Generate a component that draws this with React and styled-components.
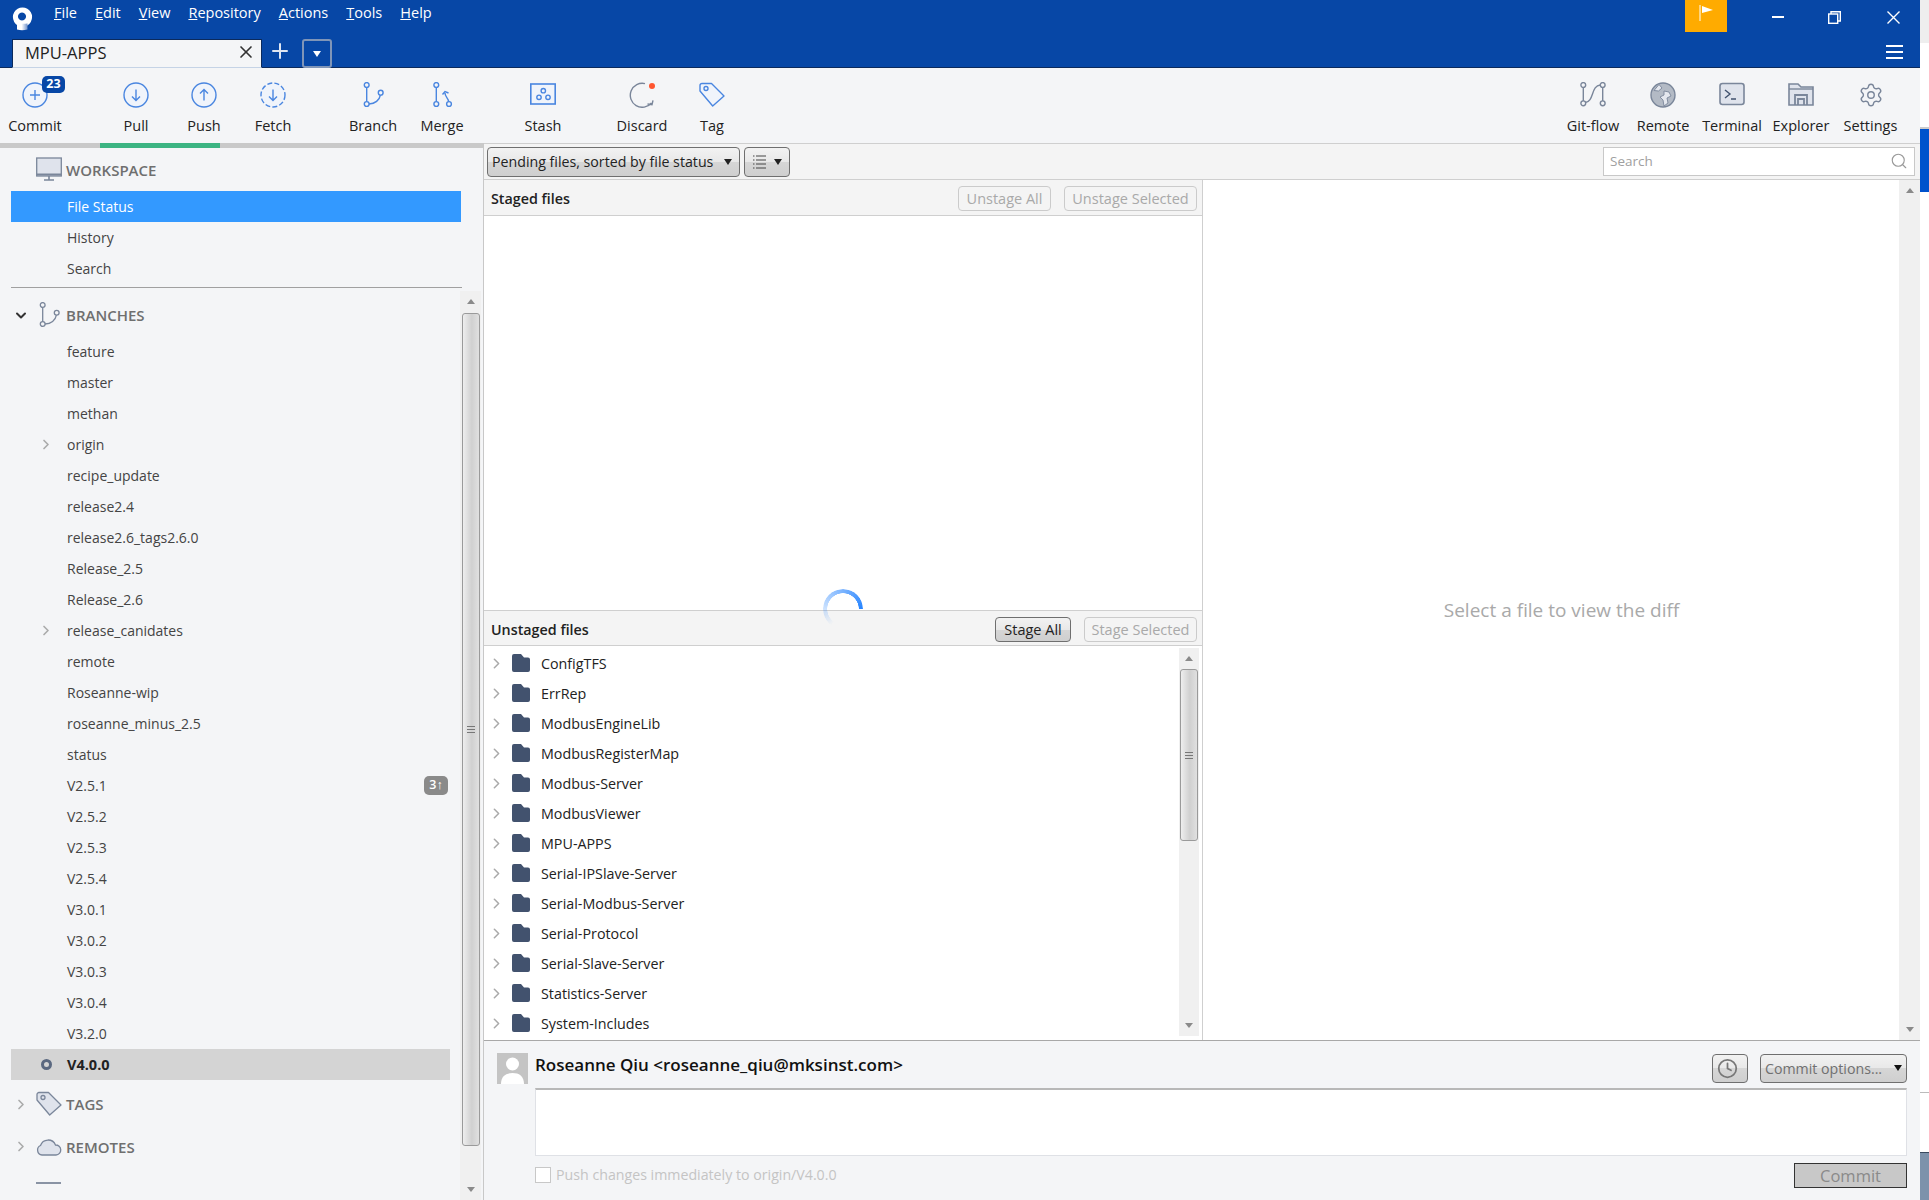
import styled, { createGlobalStyle } from "styled-components";
import { ChevronRight, ChevronDown, Clock, Search, Settings, X, Plus } from "lucide-react";

const GlobalStyle = createGlobalStyle`
  html, body {
    margin: 0;
    padding: 0;
    background: #fff;
  }
  * {
    box-sizing: border-box;
  }
  body {
    font-family: "Open Sans", "Noto Sans", "Liberation Sans", sans-serif;
    font-size: 14.5px;
    color: #222;
  }
`;

const Page = styled.div`
  display: flex;
  width: 1929px;
  height: 1200px;
  overflow: hidden;
`;

const AppFrame = styled.div`
  display: flex;
  flex-direction: column;
  width: 1920px;
  height: 1200px;
`;

const BehindStrip = styled.div`
  display: flex;
  flex-direction: column;
  width: 9px;
`;

const StripPart = styled.div`
  height: ${(p) => p.$h}px;
  flex: ${(p) => (p.$h ? "none" : 1)};
  background: ${(p) => p.$c};
  border-bottom: ${(p) => (p.$line ? `1px solid ${p.$line}` : "none")};
`;

/* title bar */
const TitleBar = styled.div`
  height: 68px;
  background: #0747a6;
  border-bottom: 1px solid #0b2a5c;
  display: flex;
  flex-direction: column;
`;

const TopRow = styled.div`
  height: 39px;
  display: flex;
  align-items: flex-start;
`;

const Logo = styled.svg`
  width: 22px;
  height: 24px;
  margin: 7px 0 0 11px;
`;

const Menu = styled.nav`
  display: flex;
  gap: 18px;
  margin-left: 21px;
  color: #fff;
  line-height: 26px;
`;

const FlagBox = styled.div`
  width: 42px;
  height: 32px;
  margin-left: auto;
  margin-right: 24px;
  background: #ffab00;
  display: flex;
  align-items: center;
  justify-content: center;
  padding-bottom: 6px;
`;

const WinButton = styled.div`
  width: 54px;
  height: 34px;
  margin-right: ${(p) => p.$mr || 0}px;
  display: flex;
  align-items: center;
  justify-content: center;
  color: #fff;
`;

const TabRow = styled.div`
  flex: 1;
  display: flex;
  align-items: flex-end;
  padding: 0 17px 0 12px;
`;

const Tab = styled.div`
  width: 250px;
  height: 29px;
  background: #f4f5f7;
  border-top: 1px solid #0b2a5c;
  border-right: 1px solid #0b2a5c;
  border-left: 1px solid #0b2a5c;
  border-bottom: 1px solid #c5d3e6;
  display: flex;
  align-items: center;
  justify-content: space-between;
  padding: 0 5px 3px 12px;
  font-size: 16.5px;
  color: #222;
  margin-bottom: -1px;
`;

const AddTab = styled.div`
  width: 30px;
  margin: 0 7px 4px 3px;
  color: #dfe6f2;
  display: flex;
  justify-content: center;
`;

const TabMenu = styled.div`
  width: 30px;
  height: 29px;
  border: 2px solid #7f95b8;
  border-radius: 3px;
  display: flex;
  align-items: center;
  justify-content: center;
  margin-bottom: -1px;
`;

const Burger = styled.div`
  margin: 0 0 8px auto;
  width: 17px;
  height: 14px;
  display: flex;
  flex-direction: column;
  justify-content: space-between;
  span {
    display: block;
    height: 2px;
    background: #fff;
  }
`;

/* toolbar */
const Toolbar = styled.div`
  height: 75px;
  background: #f4f5f7;
  display: flex;
  padding: 14px 15px 0 0;
`;

const ToolButton = styled.div`
  position: relative;
  width: ${(p) => p.$w || 68}px;
  margin-left: ${(p) => (p.$push ? "auto" : `${p.$ml || 0}px`)};
  display: flex;
  flex-direction: column;
  align-items: center;
  white-space: nowrap;
`;

const ToolLabel = styled.span`
  line-height: 20px;
  margin-top: 8px;
  color: #222;
`;

const CountBadge = styled.span`
  position: absolute;
  left: 42px;
  top: -6px;
  width: 23px;
  height: 17px;
  border-radius: 5px;
  background: #0747a6;
  color: #fff;
  font-size: 12.5px;
  font-weight: 700;
  line-height: 16px;
  text-align: center;
`;

const Glyph = styled.svg`
  width: 26px;
  height: 26px;
  fill: none;
  stroke: ${(p) => p.$stroke || "#4a86e0"};
  stroke-width: 1.4;
`;

/* body */
const Body = styled.div`
  flex: 1;
  display: flex;
  min-height: 0;
`;

const Sidebar = styled.aside`
  width: 484px;
  background: #f4f5f7;
  border-right: 1px solid #c8c8c8;
  display: flex;
  flex-direction: column;
`;

const Progress = styled.div`
  height: 5px;
  background: #c9c9c9;
  flex: none;
  span {
    display: block;
    height: 100%;
    width: 120px;
    margin-left: 100px;
    background: #3cb482;
  }
`;

const SectionHead = styled.div`
  height: ${(p) => p.$h || 43}px;
  padding-top: ${(p) => p.$pt || 0}px;
  margin-left: 11px;
  display: flex;
  align-items: center;
  color: #6f6f6f;
  font-size: 15px;
  font-weight: 600;
  flex: none;
`;

const Lead = styled.span`
  width: 16px;
  height: 16px;
  margin-left: ${(p) => p.$ml}px;
  margin-right: ${(p) => p.$mr}px;
  flex: none;
  display: flex;
  align-items: center;
  justify-content: center;
  color: ${(p) => p.$c || "#aaa"};
`;

const SectionIcon = styled.svg`
  width: 26px;
  height: 26px;
  flex: none;
  margin-right: 4px;
  fill: ${(p) => (p.$open ? "none" : "#dfe3ec")};
  stroke: #7a869a;
  stroke-width: 1.3;
`;

const NavRow = styled.div`
  height: 31px;
  margin-left: 11px;
  width: ${(p) => p.$w || 450}px;
  padding: 0 2px 0 ${(p) => (p.$lead ? 0 : 56)}px;
  display: flex;
  align-items: center;
  flex: none;
  font-size: ${(p) => (p.$current ? 14.5 : 14)}px;
  color: ${(p) => (p.$active ? "#fff" : p.$current ? "#222" : "#444")};
  font-weight: ${(p) => (p.$current ? 700 : 400)};
  background: ${(p) => (p.$active ? "#3399ff" : p.$current ? "#d4d4d4" : "transparent")};
`;

const Ahead = styled.span`
  margin-left: auto;
  width: 24px;
  height: 19px;
  border-radius: 5px;
  background: #8a8a8a;
  color: #fff;
  font-size: 12.5px;
  font-weight: 600;
  line-height: 18px;
  text-align: center;
`;

const Ring = styled.span`
  width: 11px;
  height: 11px;
  border-radius: 50%;
  border: 3px solid #5a6880;
`;

const SideRule = styled.hr`
  margin: 3px 0 0 11px;
  width: 451px;
  height: 1px;
  border: none;
  background: #a0a0a0;
  flex: none;
`;

const TreeArea = styled.div`
  flex: 1;
  display: flex;
  margin-top: 3px;
  min-height: 0;
`;

const Tree = styled.div`
  width: 460px;
  overflow: hidden;
`;

const CutIcon = styled.div`
  width: 25px;
  height: 2px;
  margin: 14px 0 0 36px;
  background: #8993a4;
`;

/* scroll bars */
const Track = styled.div`
  width: ${(p) => p.$w}px;
  flex: none;
  margin-right: ${(p) => p.$mr || 0}px;
  margin-top: ${(p) => p.$mt || 0}px;
  margin-bottom: ${(p) => p.$mb || 0}px;
  background: #f0f0f0;
  display: flex;
  flex-direction: column;
  align-items: center;
`;

const Arrow = styled.span`
  width: 0;
  height: 0;
  flex: none;
  border-left: 4px solid transparent;
  border-right: 4px solid transparent;
  ${(p) =>
    p.$up
      ? "border-bottom: 5px solid #8a8a8a; margin-top: 8px;"
      : "border-top: 5px solid #8a8a8a; margin: auto 0 8px;"}
`;

const Thumb = styled.div`
  width: 18px;
  height: ${(p) => p.$h}px;
  margin-top: ${(p) => p.$top}px;
  flex: none;
  border: 1px solid #9a9a9a;
  border-radius: 3px;
  background: linear-gradient(to right, #eee, #d0d0d0 55%, #e0e0e0);
  display: flex;
  flex-direction: column;
  align-items: center;
  justify-content: center;
  gap: 2px;
  i {
    display: block;
    width: 8px;
    height: 1px;
    background: #777;
  }
`;

/* main */
const Main = styled.main`
  flex: 1;
  display: flex;
  flex-direction: column;
  min-width: 0;
`;

const SubBar = styled.div`
  height: 37px;
  flex: none;
  display: flex;
  align-items: center;
  gap: 4px;
  padding: 0 5px 0 3px;
  background: #f4f4f4;
  border-top: 1px solid #cfcfcf;
  border-bottom: 1px solid #cfcfcf;
`;

const ClassicButton = styled.div`
  height: ${(p) => p.$h || 25}px;
  width: ${(p) => p.$w}px;
  flex: none;
  padding: 0 ${(p) => p.$pr ?? p.$px ?? 0}px 0 ${(p) => p.$px ?? 0}px;
  font-size: ${(p) => p.$fs || 14.5}px;
  display: flex;
  align-items: center;
  justify-content: ${(p) => (p.$between ? "space-between" : "center")};
  border-radius: 4px;
  white-space: nowrap;
  color: ${(p) => (p.$disabled ? "#a9a9a9" : p.$soft ? "#707070" : "#222")};
  border: 1px solid ${(p) => (p.$disabled ? "#cbcbcb" : "#6f6f6f")};
  background: ${(p) =>
    p.$disabled
      ? "#f4f4f4"
      : "linear-gradient(to bottom, #f2f2f2, #e8e8e8 50%, #d6d6d6 50%, #cfcfcf)"};
`;

const Caret = styled.span`
  width: 0;
  height: 0;
  border-left: 4px solid transparent;
  border-right: 4px solid transparent;
  border-top: 6px solid ${(p) => p.$c || "#222"};
`;

const SearchBox = styled.div`
  width: 312px;
  height: 29px;
  margin-left: auto;
  margin-bottom: 1px;
  background: #fff;
  border: 1px solid #c8c8c8;
  color: #a0a0a0;
  font-size: 13.5px;
  display: flex;
  align-items: center;
  justify-content: space-between;
  padding: 0 6px;
`;

const Panes = styled.div`
  flex: 1;
  display: flex;
  min-height: 0;
`;

const FilesPane = styled.section`
  position: relative;
  width: 719px;
  display: flex;
  flex-direction: column;
  border-right: 1px solid #cfcfcf;
`;

const PaneHead = styled.div`
  height: 36px;
  flex: none;
  display: flex;
  align-items: center;
  gap: ${(p) => p.$gap}px;
  padding: 2px 5px 0 7px;
  background: #f4f4f4;
  border-bottom: 1px solid #cfcfcf;
  border-top: ${(p) => (p.$top ? "1px solid #cfcfcf" : "none")};
  font-weight: 600;
  b {
    font-size: 14.3px;
    font-weight: 600;
    margin-right: auto;
  }
  ${ClassicButton} {
    font-weight: 400;
  }
`;

const StagedBody = styled.div`
  height: 394px;
  flex: none;
  background: #fff;
`;

const FileList = styled.div`
  flex: 1;
  display: flex;
  background: #fff;
  min-height: 0;
`;

const FileRows = styled.div`
  width: 695px;
  padding-top: 2px;
`;

const FolderRow = styled.div`
  height: 30px;
  display: flex;
  align-items: center;
  padding-left: 4px;
  font-size: 14.3px;
  color: #222;
`;

const FolderIcon = styled.svg`
  width: 18px;
  height: 18px;
  margin: 0 11px 0 7px;
  fill: #42526e;
`;

const Spinner = styled.div`
  position: absolute;
  left: 339px;
  top: 409px;
  width: 40px;
  height: 40px;
  border-radius: 50%;
  background: conic-gradient(from 215deg, transparent 0, #2684ff 235deg, transparent 235deg);
  -webkit-mask: radial-gradient(circle, transparent 15.5px, #000 16px);
  mask: radial-gradient(circle, transparent 15.5px, #000 16px);
`;

const DiffPane = styled.section`
  flex: 1;
  display: flex;
  background: #fff;
`;

const DiffHint = styled.div`
  flex: 1;
  padding-left: 21px;
  display: flex;
  align-items: center;
  justify-content: center;
  color: #a9a9a9;
  font-size: 19px;
`;

/* commit panel */
const CommitPanel = styled.div`
  height: 160px;
  flex: none;
  background: #f4f5f7;
  border-top: 1px solid #a8a8a8;
  padding: 12px 13px 0;
  display: grid;
  grid-template-columns: 38px 1fr;
  grid-template-rows: 30px 68px 1fr;
  row-gap: 5px;
`;

const Avatar = styled.svg`
  width: 31px;
  height: 31px;
  background: #c4c4c4;
  fill: #fff;
`;

const AuthorRow = styled.div`
  display: flex;
  align-items: center;
  gap: 12px;
`;

const AuthorName = styled.span`
  margin-right: auto;
  font-size: 17px;
  font-weight: 600;
  color: #111;
  padding-bottom: 7px;
`;

const MessageBox = styled.div`
  grid-column: 2;
  background: #fff;
  border: 1px solid #dfe1e6;
  border-top: 2px solid #b8b8b8;
`;

const CommitFoot = styled.div`
  grid-column: 2;
  display: flex;
  align-items: flex-start;
  padding-top: 2px;
`;

const CheckBox = styled.span`
  width: 16px;
  height: 16px;
  margin: 4px 5px 0 0;
  background: #fff;
  border: 1px solid #c8c8c8;
`;

const PushLabel = styled.span`
  color: #c4c4c4;
  font-size: 14.2px;
  line-height: 24px;
`;

const CommitButton = styled.div`
  width: 113px;
  height: 25px;
  margin-left: auto;
  background: #c8c8c8;
  border: 1px solid #333;
  color: #8a8a8a;
  font-size: 16.5px;
  line-height: 23px;
  text-align: center;
`;

const menuItems = ["File", "Edit", "View", "Repository", "Actions", "Tools", "Help"];

const branches = [
  { name: "feature" },
  { name: "master" },
  { name: "methan" },
  { name: "origin", folder: true },
  { name: "recipe_update" },
  { name: "release2.4" },
  { name: "release2.6_tags2.6.0" },
  { name: "Release_2.5" },
  { name: "Release_2.6" },
  { name: "release_canidates", folder: true },
  { name: "remote" },
  { name: "Roseanne-wip" },
  { name: "roseanne_minus_2.5" },
  { name: "status" },
  { name: "V2.5.1", ahead: "3↑" },
  { name: "V2.5.2" },
  { name: "V2.5.3" },
  { name: "V2.5.4" },
  { name: "V3.0.1" },
  { name: "V3.0.2" },
  { name: "V3.0.3" },
  { name: "V3.0.4" },
  { name: "V3.2.0" },
  { name: "V4.0.0", current: true },
];

const folders = [
  "ConfigTFS",
  "ErrRep",
  "ModbusEngineLib",
  "ModbusRegisterMap",
  "Modbus-Server",
  "ModbusViewer",
  "MPU-APPS",
  "Serial-IPSlave-Server",
  "Serial-Modbus-Server",
  "Serial-Protocol",
  "Serial-Slave-Server",
  "Statistics-Server",
  "System-Includes",
];

const BranchShape = () => (
  <>
    <circle cx="6.7" cy="3" r="2.4" fill="none" />
    <circle cx="6.7" cy="22" r="2.4" fill="none" />
    <circle cx="20.7" cy="10.7" r="2.4" fill="none" />
    <path d="M6.7 5.4V19.6M9 22C15 22 19.5 18 20.4 13.1" fill="none" />
  </>
);

const TagShape = ({ fill }) => (
  <>
    <path d="M3 1.5H12.5L25 14L13.7 24L1 9V3.5A2 2 0 0 1 3 1.5Z" fill={fill} strokeLinejoin="round" />
    <circle cx="7" cy="6.5" r="2" fill="none" />
  </>
);

function CircleTool({ children, dashed }) {
  return (
    <Glyph viewBox="0 0 26 26">
      <circle cx="13" cy="13" r="12" fill="#f0f4fb" strokeDasharray={dashed ? "5 2.2" : undefined} />
      {children}
    </Glyph>
  );
}

export default function App() {
  return (
    <Page>
      <GlobalStyle />
      <AppFrame>
        <TitleBar>
          <TopRow>
            <Logo viewBox="0 0 22 24">
              <defs>
                <linearGradient id="tail" x1="0" y1="0" x2="1" y2="0">
                  <stop offset="0.45" stopColor="#fff" />
                  <stop offset="1" stopColor="#6f91c9" />
                </linearGradient>
              </defs>
              <path
                fillRule="evenodd"
                fill="#fff"
                d="M11.5 0.5A9.6 9.6 0 1 1 11.49 0.5ZM11 5.5A4 4 0 1 0 11.01 5.5Z"
              />
              <path d="M6 15.5Q9 17.5 16.5 16.5V22.5Q11 24 6 22.5Z" fill="url(#tail)" />
            </Logo>
            <Menu>
              {menuItems.map((m) => (
                <span key={m}>
                  <u>{m[0]}</u>
                  {m.slice(1)}
                </span>
              ))}
            </Menu>
            <FlagBox>
              <svg width="15" height="16" viewBox="0 0 15 16">
                <path d="M1 0V16" stroke="#fff" strokeWidth="1" />
                <path d="M3 1L14 5L3 8Z" fill="#fff" />
              </svg>
            </FlagBox>
            <WinButton $mr={2}>
              <svg width="12" height="2" viewBox="0 0 12 2">
                <path d="M0 1H12" stroke="#fff" strokeWidth="2" />
              </svg>
            </WinButton>
            <WinButton $mr={5}>
              <svg width="13" height="13" viewBox="0 0 13 13" fill="none" stroke="#fff" strokeWidth="1.4">
                <rect x="0.7" y="3" width="9" height="9.3" />
                <path d="M3 3V0.7H12.3V10H9.7" />
              </svg>
            </WinButton>
            <WinButton>
              <svg width="13" height="13" viewBox="0 0 13 13" stroke="#fff" strokeWidth="1.4">
                <path d="M0.5 0.5L12.5 12.5M12.5 0.5L0.5 12.5" />
              </svg>
            </WinButton>
          </TopRow>
          <TabRow>
            <Tab>
              MPU-APPS
              <X size={20} color="#333" strokeWidth={2} />
            </Tab>
            <AddTab>
              <Plus size={24} strokeWidth={2} />
            </AddTab>
            <TabMenu>
              <Caret $c="#fff" />
            </TabMenu>
            <Burger>
              <span />
              <span />
              <span />
            </Burger>
          </TabRow>
        </TitleBar>

        <Toolbar>
          <ToolButton $w={70}>
            <CircleTool>
              <path d="M13 8V18M8 13H18" />
            </CircleTool>
            <CountBadge>23</CountBadge>
            <ToolLabel>Commit</ToolLabel>
          </ToolButton>
          <ToolButton $ml={32}>
            <CircleTool>
              <path d="M13 7.5V18M9 14.5L13 18.5L17 14.5" />
            </CircleTool>
            <ToolLabel>Pull</ToolLabel>
          </ToolButton>
          <ToolButton>
            <CircleTool>
              <path d="M13 18.5V8M9 11.5L13 7.5L17 11.5" />
            </CircleTool>
            <ToolLabel>Push</ToolLabel>
          </ToolButton>
          <ToolButton $w={70}>
            <CircleTool dashed>
              <path d="M13 7.5V18M9 14.5L13 18.5L17 14.5" />
            </CircleTool>
            <ToolLabel>Fetch</ToolLabel>
          </ToolButton>
          <ToolButton $ml={31}>
            <Glyph viewBox="0 0 26 26">
              <BranchShape />
            </Glyph>
            <ToolLabel>Branch</ToolLabel>
          </ToolButton>
          <ToolButton $w={70}>
            <Glyph viewBox="0 0 26 26">
              <circle cx="7.3" cy="3" r="2.4" />
              <circle cx="7.3" cy="22" r="2.4" />
              <circle cx="20" cy="22" r="2.4" />
              <path d="M7.3 5.4V19.6M19.6 19.6C19.4 16 16 15 16 11M13.5 12.5L16 9.5L19.5 11" />
            </Glyph>
            <ToolLabel>Merge</ToolLabel>
          </ToolButton>
          <ToolButton $ml={32}>
            <Glyph viewBox="0 0 26 26">
              <rect x="0.8" y="2" width="24.4" height="20" fill="#f0f4fb" strokeWidth="1.6" />
              <circle cx="13.3" cy="8.7" r="2.2" />
              <circle cx="9" cy="15.3" r="2.2" />
              <circle cx="18" cy="15.3" r="2.2" />
            </Glyph>
            <ToolLabel>Stash</ToolLabel>
          </ToolButton>
          <ToolButton $ml={31}>
            <Glyph viewBox="0 0 26 26" $stroke="#7a869a">
              <path d="M16 1.6A12 12 0 1 0 22.5 21M24 18.3L23 22.6L18.5 22" />
              <circle cx="23" cy="4" r="3" fill="#ff5630" stroke="none" />
            </Glyph>
            <ToolLabel>Discard</ToolLabel>
          </ToolButton>
          <ToolButton $ml={2}>
            <Glyph viewBox="0 0 26 26">
              <TagShape fill="#f0f4fb" />
            </Glyph>
            <ToolLabel>Tag</ToolLabel>
          </ToolButton>

          <ToolButton $w={70} $push>
            <Glyph viewBox="0 0 26 26" $stroke="#7a869a">
              <circle cx="3.3" cy="3" r="2.4" />
              <circle cx="3.3" cy="21.3" r="2.4" />
              <circle cx="22.7" cy="3" r="2.4" />
              <circle cx="22.7" cy="21.3" r="2.4" />
              <path d="M3.3 5.4V18.9M22.7 5.4V18.9M5.4 20.5C14 20 11 3.5 20.3 3" />
            </Glyph>
            <ToolLabel>Git-flow</ToolLabel>
          </ToolButton>
          <ToolButton $w={70}>
            <Glyph viewBox="0 0 26 26" $stroke="#7a869a">
              <circle cx="13" cy="13" r="12" fill="#b3bac5" />
              <path
                d="M9 2.5L12 6L8.5 9L4 8.5ZM14 9L19 10L21 14L17 16L18 21L14 24L13 18L10 15L14 13Z"
                fill="#e4e7ee"
                strokeWidth="0.9"
              />
            </Glyph>
            <ToolLabel>Remote</ToolLabel>
          </ToolButton>
          <ToolButton>
            <Glyph viewBox="0 0 26 26" $stroke="#7a869a">
              <rect x="1" y="1.5" width="24" height="21" rx="2.5" fill="#dfe3ec" strokeWidth="1.6" />
              <path d="M6 8L11 12L6 16M12 17H17" stroke="#42526e" />
            </Glyph>
            <ToolLabel>Terminal</ToolLabel>
          </ToolButton>
          <ToolButton $w={70}>
            <Glyph viewBox="0 0 26 26" $stroke="#7a869a">
              <path d="M1 2H10L13 5H25V23H1Z" fill="#dfe3ec" strokeWidth="1.6" />
              <path d="M1 7H25" />
              <path d="M7 23V13H19V23M10 23V17H16V23" strokeWidth="1.8" />
            </Glyph>
            <ToolLabel>Explorer</ToolLabel>
          </ToolButton>
          <ToolButton $w={69}>
            <Settings size={26} color="#7a869a" strokeWidth={1.3} />
            <ToolLabel>Settings</ToolLabel>
          </ToolButton>
        </Toolbar>

        <Body>
          <Sidebar>
            <Progress>
              <span />
            </Progress>
            <SectionHead>
              <Lead $ml={2} $mr={7} />
              <SectionIcon viewBox="0 0 26 26">
                <rect x="0.7" y="1" width="24.6" height="18" />
                <path d="M0.7 17.5H25.3" strokeWidth="2" />
                <path d="M13 19V23M8 23H18" strokeWidth="1.6" />
              </SectionIcon>
              WORKSPACE
            </SectionHead>
            <NavRow $active>File Status</NavRow>
            <NavRow>History</NavRow>
            <NavRow>Search</NavRow>
            <SideRule />
            <TreeArea>
              <Tree>
                <SectionHead $h={45} $pt={3}>
                  <Lead $ml={2} $mr={7} $c="#333">
                    <ChevronDown size={17} strokeWidth={3} />
                  </Lead>
                  <SectionIcon viewBox="0 0 26 26" $open>
                    <BranchShape />
                  </SectionIcon>
                  BRANCHES
                </SectionHead>
                {branches.map((b) => (
                  <NavRow key={b.name} $w={439} $lead $current={b.current}>
                    <Lead $ml={27} $mr={13}>
                      {b.folder && <ChevronRight size={17} strokeWidth={2.5} />}
                      {b.current && <Ring />}
                    </Lead>
                    {b.name}
                    {b.ahead && <Ahead>{b.ahead}</Ahead>}
                  </NavRow>
                ))}
                <SectionHead $h={45} $pt={3}>
                  <Lead $ml={2} $mr={7}>
                    <ChevronRight size={17} strokeWidth={2.5} />
                  </Lead>
                  <SectionIcon viewBox="0 0 26 26">
                    <TagShape />
                  </SectionIcon>
                  TAGS
                </SectionHead>
                <SectionHead>
                  <Lead $ml={2} $mr={7}>
                    <ChevronRight size={17} strokeWidth={2.5} />
                  </Lead>
                  <SectionIcon viewBox="0 0 26 26">
                    <path d="M6 21A5 5 0 0 1 4.5 11.5A8 8 0 0 1 19.5 11A5 5 0 0 1 20 21Z" />
                  </SectionIcon>
                  REMOTES
                </SectionHead>
                <CutIcon />
              </Tree>
              <Track $w={21}>
                <Arrow $up />
                <Thumb $top={9} $h={833}>
                  <i />
                  <i />
                  <i />
                </Thumb>
                <Arrow />
              </Track>
            </TreeArea>
          </Sidebar>

          <Main>
            <SubBar>
              <ClassicButton $w={253} $h={30} $px={4} $pr={7} $fs={14.2} $between>
                Pending files, sorted by file status
                <Caret />
              </ClassicButton>
              <ClassicButton $w={46} $h={30} $px={7} $between>
                <svg width="15" height="14" viewBox="0 0 15 14" stroke="#444">
                  <path d="M1 1H2.5M4 1H14M1 5H2.5M4 5H14M1 9H2.5M4 9H14M1 13H2.5M4 13H14" />
                </svg>
                <Caret />
              </ClassicButton>
              <SearchBox>
                Search
                <Search size={18} color="#999" strokeWidth={1.5} />
              </SearchBox>
            </SubBar>
            <Panes>
              <FilesPane>
                <PaneHead $gap={13}>
                  <b>Staged files</b>
                  <ClassicButton $w={93} $disabled>
                    Unstage All
                  </ClassicButton>
                  <ClassicButton $w={133} $disabled>
                    Unstage Selected
                  </ClassicButton>
                </PaneHead>
                <StagedBody />
                <PaneHead $gap={13} $top>
                  <b>Unstaged files</b>
                  <ClassicButton $w={76}>Stage All</ClassicButton>
                  <ClassicButton $w={113} $disabled>
                    Stage Selected
                  </ClassicButton>
                </PaneHead>
                <Spinner />
                <FileList>
                  <FileRows>
                    {folders.map((f) => (
                      <FolderRow key={f}>
                        <ChevronRight size={17} color="#aaa" strokeWidth={2.2} />
                        <FolderIcon viewBox="0 0 18 18">
                          <path d="M2 0H9L12 3.5H16A2 2 0 0 1 18 5.5V16A2 2 0 0 1 16 18H2A2 2 0 0 1 0 16V2A2 2 0 0 1 2 0Z" />
                        </FolderIcon>
                        {f}
                      </FolderRow>
                    ))}
                  </FileRows>
                  <Track $w={20} $mr={3} $mt={2} $mb={4}>
                    <Arrow $up />
                    <Thumb $top={8} $h={172}>
                      <i />
                      <i />
                      <i />
                    </Thumb>
                    <Arrow />
                  </Track>
                </FileList>
              </FilesPane>
              <DiffPane>
                <DiffHint>Select a file to view the diff</DiffHint>
                <Track $w={21}>
                  <Arrow $up />
                  <Arrow />
                </Track>
              </DiffPane>
            </Panes>
            <CommitPanel>
              <Avatar viewBox="0 0 31 31">
                <circle cx="15.5" cy="11" r="6.5" />
                <path d="M4 31C4 23 9 20 15.5 20S27 23 27 31Z" />
              </Avatar>
              <AuthorRow>
                <AuthorName>Roseanne Qiu &lt;roseanne_qiu@mksinst.com&gt;</AuthorName>
                <ClassicButton $w={36} $h={29} $pr={6}>
                  <Clock size={21} color="#777" strokeWidth={2} />
                </ClassicButton>
                <ClassicButton $w={147} $h={29} $px={4} $fs={14.2} $soft $between>
                  Commit options...
                  <Caret $c="#111" />
                </ClassicButton>
              </AuthorRow>
              <MessageBox />
              <CommitFoot>
                <CheckBox />
                <PushLabel>Push changes immediately to origin/V4.0.0</PushLabel>
                <CommitButton>Commit</CommitButton>
              </CommitFoot>
            </CommitPanel>
          </Main>
        </Body>
      </AppFrame>
      <BehindStrip>
        <StripPart $h={43} $c="#eeeeee" />
        <StripPart $h={84} $c="#ffffff" />
        <StripPart $h={2} $c="#cccccc" />
        <StripPart $h={63} $c="#0052cc" />
        <StripPart $h={901} $c="#ffffff" $line="#bbbbbb" />
        <StripPart $h={60} $c="#ffffff" $line="#3a4a5f" />
        <StripPart $c="#7d92ab" />
      </BehindStrip>
    </Page>
  );
}
